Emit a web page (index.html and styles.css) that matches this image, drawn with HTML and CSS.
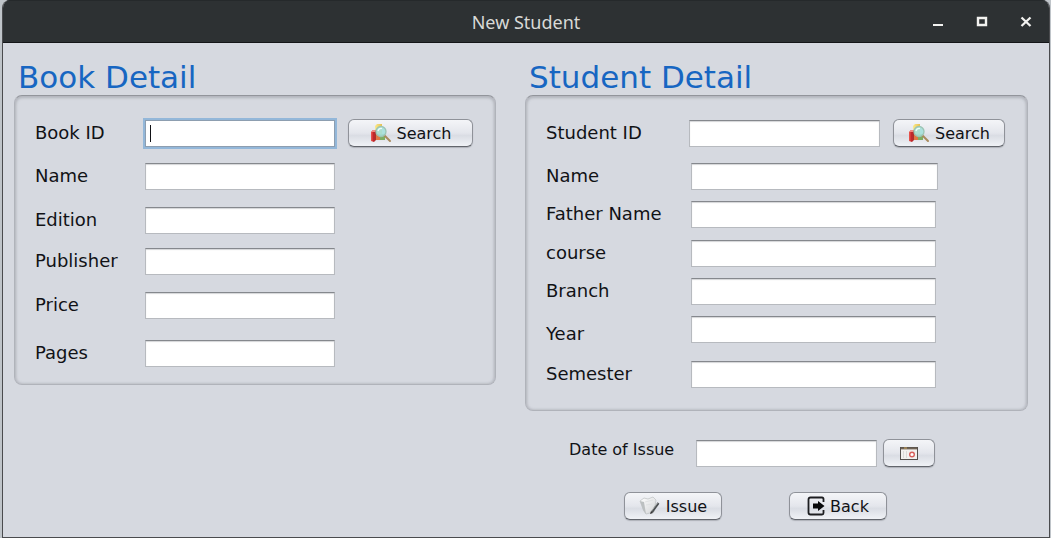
FILE: index.html
```html
<!DOCTYPE html>
<html lang="en">
<head>
<meta charset="utf-8">
<meta name="viewport" content="width=device-width, initial-scale=1">
<title>New Student</title>
<link rel="stylesheet" href="styles.css">
</head>
<body class="desktop">
<svg width="0" height="0" class="defs" aria-hidden="true">
  <defs>
    <linearGradient id="red" x1="0" x2="1"><stop offset="0" stop-color="#ee5a52"/><stop offset="0.5" stop-color="#c3272b"/><stop offset="1" stop-color="#a8322e"/></linearGradient>
    <linearGradient id="yellow" x1="0" x2="1"><stop offset="0" stop-color="#f9ea8c"/><stop offset="1" stop-color="#e8c050"/></linearGradient>
    <linearGradient id="paper" x1="0" x2="1" y2="1"><stop offset="0" stop-color="#ffffff"/><stop offset="1" stop-color="#d2d4d6"/></linearGradient>
    <symbol id="i-search" viewBox="0 0 22 20">
      <path d="M5 3 L7 1 L12 1 L12 17 L6 17 Z" fill="url(#yellow)"/>
      <path d="M6 11 H10 V17 H6 Z" fill="#e07a45"/>
      <path d="M10 11 H15 V17 H10 Z" fill="#7fae62"/>
      <path d="M1 9 L3 7 L6 7 L6 17 L4 19 L1 18 Z" fill="url(#red)"/>
      <path d="M1 9 L3 7 L6 7 L5 9 Z" fill="#f08a80"/>
      <path d="M14.500 12.500 L20 18" stroke="#a98a5c" stroke-width="2" stroke-linecap="round"/>
      <circle cx="11" cy="8.500" r="5" fill="#a5e0da" fill-opacity="0.9" stroke="#9cc4b4" stroke-width="1.300"/>
      <path d="M8 8 a3.500 3.500 0 0 1 4 -2.500" stroke="#eefcfb" stroke-width="1.400" fill="none"/>
    </symbol>
    <symbol id="i-issue" viewBox="0 0 22 20">
      <path d="M1 5 L5 2 L9 3 L14 1 L17 4 L15 16 L7 18 L5 15 Z" fill="url(#paper)" stroke="#c2c5c7" stroke-width="0.800"/>
      <path d="M1 5 L5 6 L7 18 L4 14 Z" fill="#bcc0c1"/>
      <path d="M6 6 L14 4 M7 9 L13 8" stroke="#e0e2e3" stroke-width="1"/>
      <path d="M19.500 7 L13 16" stroke="#4b4f51" stroke-width="2.200"/>
      <path d="M18.500 7 L12.500 15" stroke="#b9bcbd" stroke-width="0.800"/>
      <path d="M12 15 L11 18 L14 17 Z" fill="#333"/>
    </symbol>
    <symbol id="i-back" viewBox="0 0 18 20">
      <path d="M16.500 6 V3 Q16.500 1.500 15 1.500 H3.500 Q1.500 1.500 1.500 3.500 V16.500 Q1.500 18.500 3.500 18.500 H15 Q16.500 18.500 16.500 17 V14" fill="none" stroke="#1c1d20" stroke-width="1.800"/>
      <path d="M6 7.500 H11 V5 L17.500 10 L11 15 V12.500 H6 Z" fill="#08090b"/>
    </symbol>
    <symbol id="i-calendar" viewBox="0 0 18 13">
      <rect x="0.500" y="0.500" width="17" height="12" fill="#f3f1ef" stroke="#55504d"/>
      <path d="M1 1.500 H17" stroke="#6f6255" stroke-width="1.800"/>
      <path d="M4 1 H7" stroke="#c9a35a"/>
      <path d="M3.500 4 V11 M6.500 4 V11" stroke="#dcdad8"/>
      <circle cx="12" cy="7.500" r="2.300" fill="#fff" stroke="#d9605c" stroke-width="1.400"/>
    </symbol>
  </defs>
</svg>
<main class="window">
  <header class="titlebar">
    <h1 class="title">New Student</h1>
    <div class="controls">
      <button class="control" type="button" aria-label="Minimize"><svg width="12" height="12" viewBox="0 0 12 12"><path d="M1 9H11" stroke="#f2f2f0" stroke-width="2"/></svg></button>
      <button class="control" type="button" aria-label="Maximize"><svg width="12" height="12" viewBox="0 0 12 12"><path d="M2 2H10V9H2Z" fill="none" stroke="#f2f2f0" stroke-width="2.400"/></svg></button>
      <button class="control" type="button" aria-label="Close"><svg width="12" height="12" viewBox="0 0 12 12"><path d="M1.500 1.500L10.500 10M10.500 1.500L1.500 10" stroke="#f2f2f0" stroke-width="2.300"/></svg></button>
    </div>
  </header>
  <form class="content">
    <section class="column">
      <h2 class="heading">Book Detail</h2>
      <div class="panel book">
        <div class="row id-row">
          <label class="label" for="book-id">Book ID</label>
          <div class="focus-box"><input class="field focused" id="book-id" type="text"><span class="caret"></span></div>
          <button class="button search" type="button"><svg class="icon" width="22" height="20"><use href="#i-search"/></svg>Search</button>
        </div>
        <div class="row"><label class="label" for="book-name">Name</label><input class="field" id="book-name" type="text"></div>
        <div class="row"><label class="label" for="edition">Edition</label><input class="field" id="edition" type="text"></div>
        <div class="row"><label class="label" for="publisher">Publisher</label><input class="field" id="publisher" type="text"></div>
        <div class="row"><label class="label" for="price">Price</label><input class="field" id="price" type="text"></div>
        <div class="row"><label class="label" for="pages">Pages</label><input class="field" id="pages" type="text"></div>
      </div>
    </section>
    <section class="column">
      <h2 class="heading">Student Detail</h2>
      <div class="panel student">
        <div class="row id-row">
          <label class="label" for="student-id">Student ID</label>
          <input class="field" id="student-id" type="text">
          <button class="button search" type="button"><svg class="icon" width="22" height="20"><use href="#i-search"/></svg>Search</button>
        </div>
        <div class="row name-row"><label class="label" for="student-name">Name</label><input class="field" id="student-name" type="text"></div>
        <div class="row"><label class="label" for="father">Father Name</label><input class="field" id="father" type="text"></div>
        <div class="row"><label class="label" for="course">course</label><input class="field" id="course" type="text"></div>
        <div class="row"><label class="label" for="branch">Branch</label><input class="field" id="branch" type="text"></div>
        <div class="row"><label class="label low" for="year">Year</label><input class="field" id="year" type="text"></div>
        <div class="row"><label class="label" for="semester">Semester</label><input class="field" id="semester" type="text"></div>
      </div>
      <div class="date-row">
        <label class="date-label" for="date">Date of Issue</label>
        <input class="field" id="date" type="text">
        <button class="button calendar" type="button" aria-label="Choose date"><svg width="18" height="13"><use href="#i-calendar"/></svg></button>
      </div>
      <div class="actions">
        <button class="button action" type="button"><svg class="icon" width="22" height="20"><use href="#i-issue"/></svg>Issue</button>
        <button class="button action" type="button"><svg class="icon" width="18" height="20"><use href="#i-back"/></svg>Back</button>
      </div>
    </section>
  </form>
</main>
</body>
</html>
```

FILE: styles.css
```css
* {
  box-sizing: border-box;
}

.desktop {
  margin: 0;
  padding: 0 1px 0 2px;
  min-height: 100vh;
  display: flex;
  background: #bfc4c9;
  font-family: "DejaVu Sans", sans-serif;
  color: #111216;
}

.defs {
  position: absolute;
}

.window {
  flex: 1;
  min-width: 0;
  background: #d6d9e0;
  border: 1px solid #4a4b4e;
  border-top: 0;
  border-radius: 8px 8px 0 0;
  overflow: hidden;
}

.titlebar {
  display: grid;
  grid-template-columns: 1fr auto 1fr;
  align-items: center;
  height: 43px;
  background: #2d3133;
  border-top: 1px solid #25292b;
  border-bottom: 1px solid #141618;
}

.title {
  grid-column: 2;
  margin: 0;
  font: 400 18px/24px "Noto Sans", sans-serif;
  color: #d8d9d7;
}

.controls {
  display: flex;
  justify-content: flex-end;
  gap: 20px;
  padding-right: 11px;
}

.control {
  width: 24px;
  height: 24px;
  padding: 0;
  border: 0;
  background: none;
  display: grid;
  place-items: center;
}

.content {
  display: grid;
  grid-template-columns: 482fr 503fr;
  gap: 29px;
  padding: 16px 21px 16px 11px;
}

.column {
  min-width: 0;
}

.heading {
  margin: 0;
  padding-left: 4px;
  font-size: 31px;
  line-height: 36px;
  font-weight: 400;
  color: #1766c2;
}

.panel {
  display: grid;
  border: 1px solid #b0b3ba;
  border-top-color: #92959b;
  border-radius: 8px;
  box-shadow: inset 0 2px 3px #b4b7be, inset 1px 0 3px #b8bbc2, inset -1px 0 3px #b8bbc2;
}

.book {
  grid-template-rows: 44px 42px 46px 36px 52px 44px;
  padding: 15px 22px 9px 20px;
}

.student {
  grid-template-rows: 44px 42px 34px 44px 32px 44px 46px;
  padding: 15px 22px 13px 20px;
}

.row {
  display: flex;
  align-items: center;
}

.book .row {
  padding-right: 138px;
}

.student .row {
  padding-right: 69px;
}

.student .name-row {
  padding-right: 67px;
}

.panel .id-row {
  padding-right: 0;
}

.label {
  flex: 0 0 110px;
  font-size: 18px;
  line-height: 22px;
}

.student .label {
  flex-basis: 145px;
}

.student .id-row .label {
  flex-basis: 143px;
}

.low {
  padding-top: 10px;
}

.field {
  flex: 1;
  min-width: 0;
  width: 100%;
  height: 27px;
  padding: 2px 6px;
  border: 1px solid #b7babf;
  border-top-color: #85888d;
  background: #fff;
  box-shadow: inset 0 1px 1px #d4d5d8;
  font: 16px "DejaVu Sans", sans-serif;
  outline: 0;
}

.focus-box {
  position: relative;
  flex: 1;
  min-width: 0;
  display: flex;
}

.focused {
  border-color: #8d9eb0;
  box-shadow: 0 0 0 2px #93b7d9;
}

.caret {
  position: absolute;
  left: 5px;
  top: 5px;
  width: 1px;
  height: 17px;
  background: #111216;
}

.button {
  display: flex;
  align-items: center;
  justify-content: center;
  height: 28px;
  padding: 0;
  border: 1px solid #8f9299;
  border-bottom-color: #62656c;
  border-radius: 6px;
  background: linear-gradient(#f4f5f8, #e4e6ec 50%, #dadde4 60%, #f0f2f6);
  box-shadow: 0 1px 1px #aeb1b8;
  font: 16px "DejaVu Sans", sans-serif;
  color: #111216;
}

.icon {
  margin-right: 5px;
}

.search {
  flex: 0 0 125px;
  margin-left: 13px;
}

.student .search {
  flex-basis: 112px;
}

.date-row {
  display: flex;
  align-items: center;
  margin-top: 28px;
  padding: 0 93px 0 44px;
}

.date-label {
  flex: 0 0 127px;
  padding-bottom: 6px;
  font-size: 16px;
  line-height: 20px;
}

.calendar {
  flex: 0 0 52px;
  margin-left: 6px;
}

.actions {
  display: flex;
  gap: 67px;
  margin-top: 25px;
  padding-left: 99px;
}

.action {
  width: 98px;
}
```
